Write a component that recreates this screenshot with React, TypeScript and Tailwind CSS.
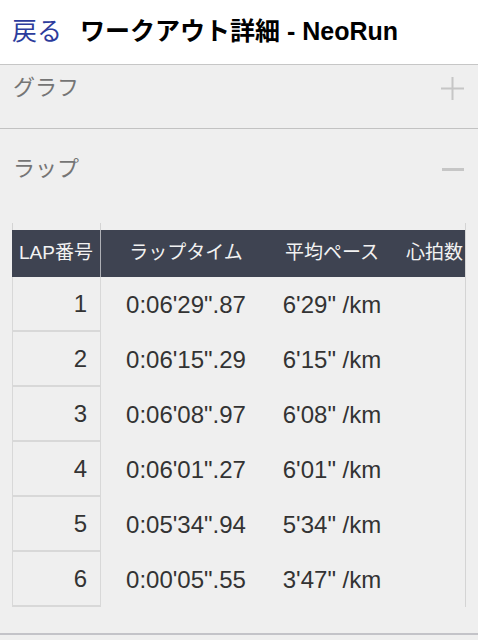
import React from "react";

const font = { fontFamily: '"Liberation Sans", "Noto Sans CJK JP", sans-serif' };

const rows = [
  ["1", "0:06'29\".87", "6'29\" /km"],
  ["2", "0:06'15\".29", "6'15\" /km"],
  ["3", "0:06'08\".97", "6'08\" /km"],
  ["4", "0:06'01\".27", "6'01\" /km"],
  ["5", "0:05'34\".94", "5'34\" /km"],
  ["6", "0:00'05\".55", "3'47\" /km"],
];

export default function App() {
  return (
    <div className="w-[478px] h-[640px] overflow-hidden bg-[#efefef]" style={font}>
      <div className="h-[65px] bg-white border-b border-[#c6c6c6] flex items-center pl-3 pb-[2px]">
        <span className="text-[25px] text-[#2d3c9c] leading-none">戻る</span>
        <span className="ml-[18px] text-[25px] font-bold text-black leading-none whitespace-nowrap">ワークアウト詳細 - NeoRun</span>
      </div>

      <div className="h-[64px] border-b border-[#c2c2c2] pt-[10px]">
        <div className="flex items-center justify-between pl-[13px] pr-[14px] h-[26px]">
          <span className="text-[22px] text-[#757575] leading-none">グラフ</span>
          <svg width="23" height="23" viewBox="0 0 23 23">
            <rect x="10.5" y="0" width="2" height="23" fill="#c6c6c6" />
            <rect x="0" y="10.5" width="23" height="2" fill="#c6c6c6" />
          </svg>
        </div>
      </div>

      <div className="pt-[27px] pb-[26px] border-b-2 border-[#c3c3c8]">
        <div className="flex items-center justify-between pl-[13px] pr-[14px] h-[26px]">
          <span className="text-[22px] text-[#757575] leading-none">ラップ</span>
          <div className="w-[22px] h-[3px] bg-[#c6c6c6]" />
        </div>

        <div className="mt-[41px] mx-3 border-r border-[#d4d4d4]">
          <div className="h-[7px] w-[89px] border-l border-r border-[#d4d4d4]" />
          <div className="grid grid-cols-[89px_170px_122px_73px] h-[47px] bg-[#3e4351] text-[19px] text-[#f2f2f2] items-center">
            <div className="h-full flex items-center justify-center border-r border-[#aeb0b6] whitespace-nowrap">LAP番号</div>
            <div className="text-center whitespace-nowrap">ラップタイム</div>
            <div className="text-center whitespace-nowrap">平均ペース</div>
            <div className="pl-[13px] whitespace-nowrap">心拍数</div>
          </div>
          {rows.map((r, i) => (
            <div key={i} className="grid grid-cols-[89px_170px_122px_73px] h-[55px] text-[24px] text-[#333333] items-center">
              <div className="h-full flex items-center justify-end pr-[13px] border-l border-r border-b-2 border-[#d8d8d8]">{r[0]}</div>
              <div className="text-center whitespace-nowrap">{r[1]}</div>
              <div className="text-center whitespace-nowrap">{r[2]}</div>
              <div />
            </div>
          ))}
        </div>
      </div>
    </div>
  );
}
